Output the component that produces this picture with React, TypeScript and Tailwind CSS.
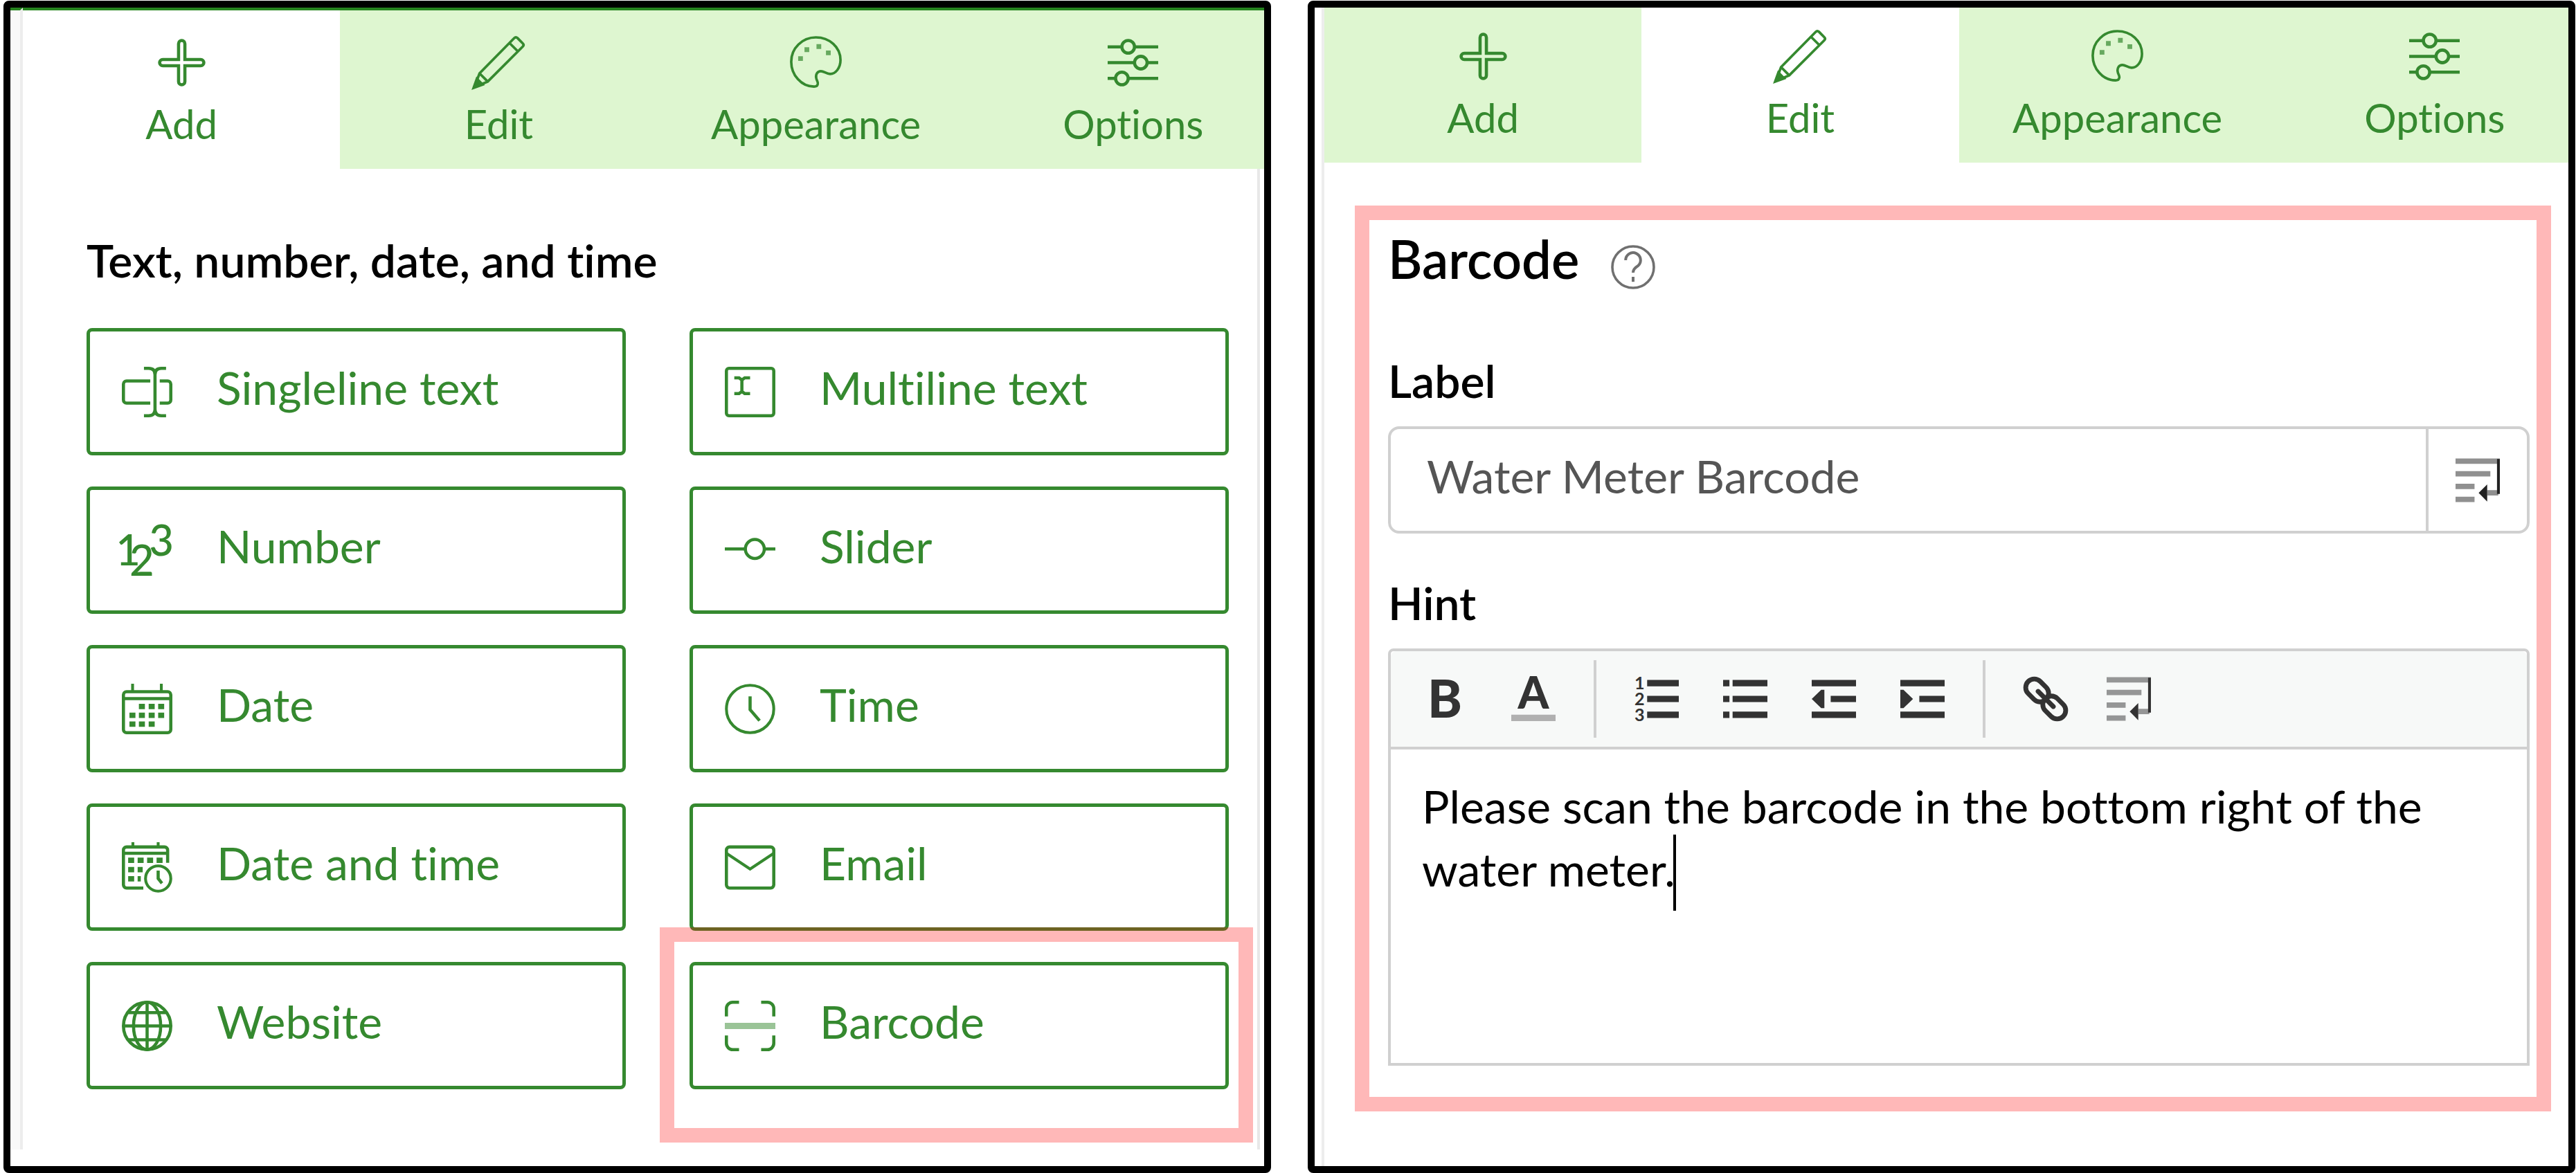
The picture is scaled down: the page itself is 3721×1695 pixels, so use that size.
import { useState } from "react";
import type { ReactNode } from "react";

type IconProps = { children: ReactNode; className?: string };

// Outline icons are drawn on a 16 unit grid with one unit strokes
function Icon({ children, className = "size-[73px]" }: IconProps) {
  return (
    <svg
      viewBox="0 0 16 16"
      className={`shrink-0 overflow-visible ${className}`}
      fill="none"
      stroke="currentColor"
      aria-hidden="true"
    >
      {children}
    </svg>
  );
}

// Toolbar icons are solid and use a 14 unit grid
function ToolIcon({ children }: { children: ReactNode }) {
  return (
    <svg
      viewBox="0 0 14 14"
      className="size-16 shrink-0 overflow-visible"
      fill="currentColor"
      aria-hidden="true"
    >
      {children}
    </svg>
  );
}

const tabs = [
  {
    name: "Add",
    icon: (
      <Icon>
        <path d="M7 2a1 1 0 0 1 2 0v5h5a1 1 0 0 1 0 2H9v5a1 1 0 0 1-2 0V9H2a1 1 0 0 1 0-2h5z" />
      </Icon>
    ),
  },
  {
    name: "Edit",
    icon: (
      <Icon>
        <path
          d="M.3 15.700 1.900 11.400 12.900.2q.5-.5 1 0l1.700 1.700q.5.500 0 1L4.500 14zM11.400 1.800l2.600 2.600M1.900 11.400 4.500 14"
          strokeWidth=".8"
        />
        <path d="m.2 15.800.9-2.500 1.600 1.600z" fill="currentColor" />
      </Icon>
    ),
  },
  {
    name: "Appearance",
    icon: (
      <Icon>
        <path
          d="M7.4 15.6C3.4 15.6.2 11.900.2 7.700.2 3.400 3.700 0 8 0s7.800 3.100 7.800 7.200c0 2.400-1.500 4.400-3.300 4.400-1.200 0-1.900-.9-2.900-.9-1.100 0-1.700 1-1.500 2.100.1.900.7 1.300.5 2-.1.600-.6.800-1.200.8z"
          strokeWidth=".8"
        />
        <path d="M2.400 6.700h1.500M4.400 3.900h1.500M8.200 2.900h1.500M11.200 4.900h1.500" strokeWidth="1.500" opacity=".7" />
      </Icon>
    ),
  },
  {
    name: "Options",
    icon: (
      <Icon>
        <path d="M0 3h4.500M8.500 3H16M0 8h8.500M12.500 8H16M0 13h2.500M6.500 13H16" />
        <circle cx="6.500" cy="3" r="2" />
        <circle cx="10.500" cy="8" r="2" />
        <circle cx="4.500" cy="13" r="2" />
      </Icon>
    ),
  },
];

const questions = [
  {
    name: "Singleline text",
    icon: (
      <Icon>
        <path d="M9 4.500H1.500a1 1 0 0 0-1 1v5a1 1 0 0 0 1 1H9M12 4.500h2.500a1 1 0 0 1 1 1v5a1 1 0 0 1-1 1H12M7 .5h1.500q2 0 2 2v11q0 2-2 2H7M14 .5h-1.500q-2 0-2 2M14 15.500h-1.500q-2 0-2-2" />
      </Icon>
    ),
  },
  {
    name: "Multiline text",
    icon: (
      <Icon>
        <rect x=".5" y=".5" width="15" height="15" rx=".8" />
        <path d="M3 3.500h1.500l.9.700.9-.7H8M3 8.500h1.500l.9-.7.9.7H8M5.400 4v4.500" />
      </Icon>
    ),
  },
  {
    name: "Number",
    icon: (
      <Icon>
        <g fill="currentColor" stroke="none" fontFamily="Lato, sans-serif" fontSize="13.500" fontWeight="500">
          <text x="-1.900" y="12.800">1</text>
          <text x="2.400" y="16">2</text>
          <text x="8.600" y="9.700">3</text>
        </g>
      </Icon>
    ),
  },
  {
    name: "Slider",
    icon: (
      <Icon>
        <path d="M0 7.500h6.500M12.500 7.500H16" />
        <circle cx="9.500" cy="7.500" r="3" />
      </Icon>
    ),
  },
  {
    name: "Date",
    icon: (
      <Icon>
        <path d="M3.400 0v2.500M12.500 0v2.500" strokeWidth=".9" />
        <rect x=".5" y="2.500" width="15" height="13" rx="1" />
        <path d="M.5 4.700h15" />
        <path
          d="M5.400 7.200h1.900M8.500 7.200h1.900M11.500 7.200h1.900M2.400 10h1.900M5.400 10h1.900M8.500 10h1.900M11.500 10h1.900M2.400 12.800h1.900M5.400 12.800h1.900M8.500 12.800h1.900"
          strokeWidth="1.700"
        />
      </Icon>
    ),
  },
  {
    name: "Time",
    icon: (
      <Icon>
        <circle cx="8" cy="8" r="7.500" strokeWidth=".9" />
        <path d="M8 4v4.200l3 3.500" />
      </Icon>
    ),
  },
  {
    name: "Date and time",
    icon: (
      <Icon>
        <path d="M3.500 0v1.500M11.500 0v1.500" strokeWidth=".9" />
        <path d="M6.800 14.500H1.500a1 1 0 0 1-1-1v-11a1 1 0 0 1 1-1h12a1 1 0 0 1 1 1v4M.5 3.500h14" />
        <path
          d="M2 5.700h1.900M5 5.700h1.900M8 5.700h1.900M11 5.700h1.900M2 8.700h1.900M5 8.700h1.600M2 11.600h1.900M5 11.600h1"
          strokeWidth="1.700"
        />
        <circle cx="11.500" cy="11.500" r="4" strokeWidth=".9" />
        <path d="M11.500 9v2.500l1.200 1.500" />
      </Icon>
    ),
  },
  {
    name: "Email",
    icon: (
      <Icon>
        <rect x=".5" y="1.500" width="15" height="13" rx="1" />
        <path d="M.5 3.500 8 8.500l7.500-5" strokeWidth=".9" />
      </Icon>
    ),
  },
  {
    name: "Website",
    icon: (
      <Icon>
        <circle cx="8" cy="8" r="7.500" />
        <ellipse cx="8" cy="8" rx="4.300" ry="7.500" />
        <path d="M8 .5v15M.5 8h15M2 3.800h12M2 12.400h12" />
      </Icon>
    ),
  },
  {
    name: "Barcode",
    icon: (
      <Icon>
        <path d="M.5 5V2.500a2 2 0 0 1 2-2h2M11.500.5h2a2 2 0 0 1 2 2V5M15.500 11v2.500a2 2 0 0 1-2 2h-2M4.500 15.500h-2a2 2 0 0 1-2-2V11" />
        <path d="M0 8h16" strokeWidth="2" opacity=".5" />
      </Icon>
    ),
    highlighted: true,
  },
];

function WrapIcon() {
  return (
    <ToolIcon>
      <path
        d="M0 .1h14v1.700H0zM0 4.100h11v1.700H0zM0 8.100h6v1.700H0zM0 12.200h6v1.700H0zM10 10.100h3.500v1.700H10z"
        opacity=".5"
      />
      <path d="M13.100.3h.9v11h-.9zM7.300 11 10 8.300v5.400z" />
    </ToolIcon>
  );
}

const tools = [
  {
    name: "Bold",
    icon: (
      <ToolIcon>
        <text x="7" y="13" textAnchor="middle" fontFamily="Lato, sans-serif" fontWeight="900" fontSize="16.500">
          B
        </text>
      </ToolIcon>
    ),
  },
  {
    name: "Text color",
    icon: (
      <ToolIcon>
        <text x="7" y="10" textAnchor="middle" fontFamily="Lato, sans-serif" fontWeight="900" fontSize="14">
          A
        </text>
        <path d="M0 12h14v2H0z" fill="#b0b0b0" />
      </ToolIcon>
    ),
  },
  {
    name: "Numbered list",
    icon: (
      <ToolIcon>
        <path d="M4 1h10v2H4zM4 6h10v2H4zM4 11h10v2H4z" />
        <g fontFamily="Lato, sans-serif" fontWeight="700" fontSize="5.500">
          <text x="0" y="4">1</text>
          <text x="0" y="9">2</text>
          <text x="0" y="14">3</text>
        </g>
      </ToolIcon>
    ),
    divided: true,
  },
  {
    name: "Bulleted list",
    icon: (
      <ToolIcon>
        <path d="M0 1h2v2H0zM0 6h2v2H0zM0 11h2v2H0zM3 1h11v2H3zM3 6h11v2H3zM3 11h11v2H3z" />
      </ToolIcon>
    ),
  },
  {
    name: "Decrease indent",
    icon: (
      <ToolIcon>
        <path d="M0 1h14v2H0zM6 6h8v2H6zM0 11h14v2H0zM0 7l3-2.900h1v5.800H3z" />
      </ToolIcon>
    ),
  },
  {
    name: "Increase indent",
    icon: (
      <ToolIcon>
        <path d="M0 1h14v2H0zM6 6h8v2H6zM0 11h14v2H0zM4 7 1 4.100H0v5.800h1z" />
      </ToolIcon>
    ),
  },
  {
    name: "Link",
    icon: (
      <ToolIcon>
        <g fill="none" stroke="currentColor" strokeWidth="1.500">
          <rect x=".3" y="1.600" width="8" height="5.400" rx="2.700" transform="rotate(45 4.300 4.300)" />
          <rect x="5.700" y="7" width="8" height="5.400" rx="2.700" transform="rotate(45 9.700 9.700)" />
          <path d="m4.600 4.600 4.800 4.800" strokeLinecap="round" />
        </g>
      </ToolIcon>
    ),
    divided: true,
  },
];

function Panel({ active, children }: { active: string; children: ReactNode }) {
  const isFirst = active === "Add";

  return (
    <section
      className={`flex flex-1 min-w-0 overflow-hidden rounded-lg border-10 border-black bg-white ${
        isFirst ? "pb-6" : ""
      }`}
    >
      <div
        className={`shrink-0 border-r-4 border-[#ededed] ${
          isFirst ? "w-[18px] border-t-4 border-t-[#26841f] bg-[#f9f9f9]" : "w-[14px]"
        }`}
      />
      <div className="flex-1 min-w-0">
        <div
          role="tablist"
          className={`flex ${
            isFirst ? "-mr-10 border-t-4 border-[#26841f] h-[233px]" : "-mr-9 h-[224px]"
          }`}
        >
          {tabs.map((tab) => (
            <button
              key={tab.name}
              type="button"
              role="tab"
              aria-selected={tab.name === active}
              className={`flex flex-1 flex-col items-center cursor-pointer text-[#35892f] ${
                isFirst ? "pt-[39px]" : "pt-[34px]"
              } ${tab.name === active ? "bg-white" : "bg-[#def6d0]"}`}
            >
              {tab.icon}
              <span className="mt-4 text-[58px] leading-[72px]">{tab.name}</span>
            </button>
          ))}
        </div>
        {children}
      </div>
    </section>
  );
}

function AddPanel() {
  return (
    <Panel active="Add">
      <div className="mr-[6px] border-r-4 border-[#e8e8e8] pt-[92px] pb-[87px] pl-[92px] pr-[41px]">
        <h2 className="text-[66px] leading-[80px] font-semibold text-black">
          Text, number, date, and time
        </h2>
        <div className="mt-[58px] grid grid-cols-2 gap-x-[92px] gap-y-[45px]">
          {questions.map((question) => (
            <div key={question.name} className="relative">
              <button
                type="button"
                className="flex h-[184px] w-full items-center gap-16 rounded-lg border-5 border-[#35892f] pl-[46px] text-[#35892f] cursor-pointer"
              >
                {question.icon}
                <span className="pb-3 text-[66px] leading-[80px]">{question.name}</span>
              </button>
              {question.highlighted && (
                <div className="pointer-events-none absolute -top-[50px] -right-[35px] -bottom-[77px] -left-[43px] border-21 border-[#ff0000]/28" />
              )}
            </div>
          ))}
        </div>
      </div>
    </Panel>
  );
}

function EditPanel() {
  const [label, setLabel] = useState("Water Meter Barcode");
  const [hint, setHint] = useState(
    "Please scan the barcode in the bottom right of the water meter."
  );

  return (
    <Panel active="Edit">
      <div className="mt-[62px] ml-11 mr-[25px] border-21 border-[#ff0000]/28 pt-3 pr-[10px] pb-[45px] pl-[27px]">
        <div className="flex items-end gap-[46px]">
          <h2 className="text-[76px] leading-[88px] font-semibold text-black">Barcode</h2>
          <button type="button" aria-label="Help" className="cursor-pointer text-[#707070]">
            <Icon className="size-16">
              <circle cx="8" cy="8" r="7.500" strokeWidth=".9" />
              <path d="M5.300 5.500a2.700 2.700 0 1 1 4.500 2Q8 8.600 8 10" />
              <path d="M8 11.500v1.800" />
            </Icon>
          </button>
        </div>

        <label htmlFor="label" className="mt-[96px] block text-[66px] leading-[72px] font-semibold text-black">
          Label
        </label>
        <div className="mt-[30px] flex h-[155px] rounded-2xl border-4 border-[#d0d0d0]">
          <input
            id="label"
            value={label}
            onChange={(e) => setLabel(e.target.value)}
            className="min-w-0 flex-1 bg-transparent pb-3 pl-[52px] text-[66px] text-[#555555] outline-none"
          />
          <button
            type="button"
            aria-label="Insert field"
            className="flex w-[146px] items-center justify-center border-l-4 border-[#d0d0d0] text-[#222222] cursor-pointer"
          >
            <WrapIcon />
          </button>
        </div>

        <label htmlFor="hint" className="mt-16 block text-[66px] leading-[72px] font-semibold text-black">
          Hint
        </label>
        <div className="mt-[30px] rounded-t-lg border-4 border-[#d0d0d0]">
          <div className="flex h-[142px] items-center rounded-t-lg border-b-4 border-[#d0d0d0] bg-[#f7f9f8] pl-[14px] text-[#333333]">
            {tools.map((tool) => (
              <div key={tool.name} className="flex items-center">
                {tool.divided && <div className="mx-[23px] h-28 w-1 bg-[#d0d0d0]" />}
                <button
                  type="button"
                  aria-label={tool.name}
                  className="flex w-32 justify-center cursor-pointer"
                >
                  {tool.icon}
                </button>
              </div>
            ))}
            <button type="button" aria-label="Insert field" className="flex w-28 justify-center cursor-pointer">
              <WrapIcon />
            </button>
          </div>
          <div className="relative">
            <textarea
              id="hint"
              value={hint}
              onChange={(e) => setHint(e.target.value)}
              className="block h-[453px] w-full resize-none pt-[36px] pr-[30px] pl-[45px] text-[66px] leading-[91px] text-black outline-none"
            />
            <div className="absolute top-[123px] left-[408px] h-[110px] w-1 bg-black" />
          </div>
        </div>
      </div>
    </Panel>
  );
}

export default function App() {
  return (
    <main className="flex min-h-screen gap-[53px] bg-white pt-px pr-px pl-[5px] font-[Lato,'Open_Sans',sans-serif] [font-variant-ligatures:none]">
      <AddPanel />
      <EditPanel />
    </main>
  );
}
